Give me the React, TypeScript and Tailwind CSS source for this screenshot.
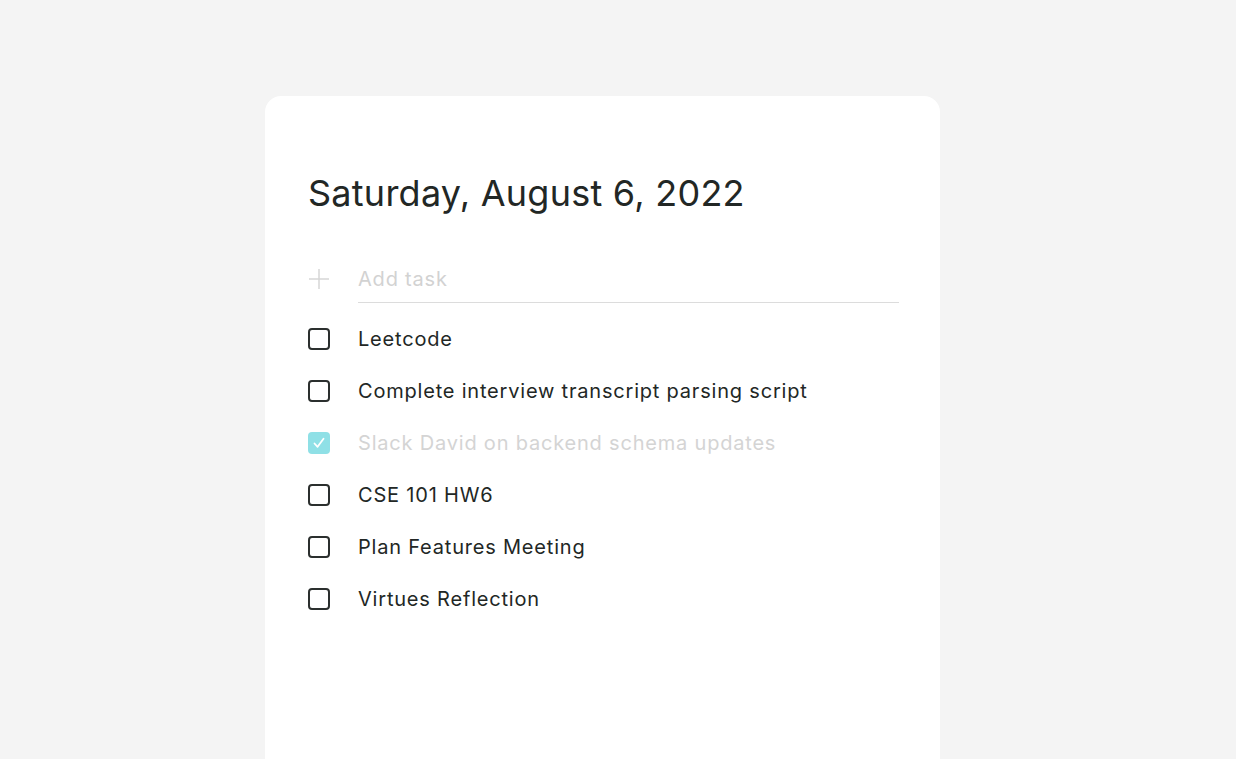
import { useState } from 'react';

type Task = { id: number; title: string; done: boolean };

const initialTasks: Task[] = [
  { id: 1, title: 'Leetcode', done: false },
  { id: 2, title: 'Complete interview transcript parsing script', done: false },
  { id: 3, title: 'Slack David on backend schema updates', done: true },
  { id: 4, title: 'CSE 101 HW6', done: false },
  { id: 5, title: 'Plan Features Meeting', done: false },
  { id: 6, title: 'Virtues Reflection', done: false },
];

function Checkbox({ checked, onClick }: { checked: boolean; onClick: () => void }) {
  if (checked) {
    return (
      <button
        onClick={onClick}
        className="w-[22px] h-[22px] rounded-[4px] bg-[#8fe0e6] flex items-center justify-center shrink-0"
      >
        <svg width="14" height="14" viewBox="0 0 14 14" fill="none">
          <path
            d="M2.5 7.5L5.6 10.8L11.5 2.8"
            stroke="white"
            strokeWidth="1.8"
            strokeLinecap="round"
            strokeLinejoin="round"
          />
        </svg>
      </button>
    );
  }
  return (
    <button
      onClick={onClick}
      className="w-[22px] h-[22px] rounded-[4px] border-2 border-[#2b2f2e] shrink-0"
    />
  );
}

export default function App() {
  const [tasks, setTasks] = useState(initialTasks);
  const [newTask, setNewTask] = useState('');

  const toggle = (id: number) =>
    setTasks((prev) => prev.map((t) => (t.id === id ? { ...t, done: !t.done } : t)));

  return (
    <div
      className="min-h-screen bg-[#f4f4f4] overflow-hidden"
      style={{ fontFamily: 'Inter, "Noto Sans", sans-serif' }}
    >
      <div className="ml-[265px] mt-[96px] w-[675px] min-h-[700px] bg-white rounded-t-[16px] pt-[75px] pl-[43px] pr-[41px]">
        <h1 className="text-[36px] leading-[44px] tracking-[0.25px] text-[#222725] font-normal">
          Saturday, August 6, 2022
        </h1>

        <div className="mt-[40px] flex items-center h-12">
          <div className="w-[22px] shrink-0 flex items-center justify-center">
            <svg width="22" height="22" viewBox="0 0 22 22" fill="none">
              <path d="M11 1V21M1 11H21" stroke="#d6d6d6" strokeWidth="1.5" />
            </svg>
          </div>
          <input
            value={newTask}
            onChange={(e) => setNewTask(e.target.value)}
            onKeyDown={(e) => {
              if (e.key === 'Enter' && newTask.trim()) {
                setTasks((prev) => [...prev, { id: Date.now(), title: newTask, done: false }]);
                setNewTask('');
              }
            }}
            placeholder="Add task"
            className="ml-[28px] flex-1 h-12 border-b border-[#dcdcdc] text-[20px] tracking-[0.8px] text-[#222725] placeholder:text-[#d2d2d2] outline-none bg-transparent"
          />
        </div>

        <ul className="mt-[10px]">
          {tasks.map((task) => (
            <li key={task.id} className="flex items-center h-[52px]">
              <Checkbox checked={task.done} onClick={() => toggle(task.id)} />
              <span
                className={
                  'ml-[28px] text-[20px] tracking-[0.8px] ' +
                  (task.done ? 'text-[#d4d4d4]' : 'text-[#222725]')
                }
              >
                {task.title}
              </span>
            </li>
          ))}
        </ul>
      </div>
    </div>
  );
}
